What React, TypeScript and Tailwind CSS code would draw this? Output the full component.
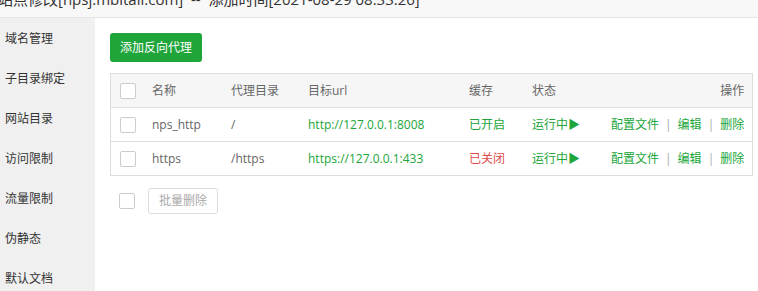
const MENU = ['域名管理', '子目录绑定', '网站目录', '访问限制', '流量限制', '伪静态', '默认文档'];

const ROWS = [
  { name: 'nps_http', dir: '/', url: 'http://127.0.0.1:8008', cache: true },
  { name: 'https', dir: '/https', url: 'https://127.0.0.1:433', cache: false },
];

const font = { fontFamily: '"Microsoft YaHei", "Open Sans", "Noto Sans CJK SC", sans-serif' };

function Check() {
  return <span className="block h-4 w-4 rounded-[2px] border border-[#cccccc] bg-white" />;
}

const cols = 'grid grid-cols-[32px_79px_77px_161px_63px_79px_1fr] items-center pl-[9px] pr-[8px]';

export default function App() {
  return (
    <div className="flex h-[291px] w-[758px] flex-col overflow-hidden bg-white text-[12px] text-[#666]" style={font}>
      <div className="h-[18px] shrink-0 overflow-hidden border-b border-[#e6e6e6] bg-[#f8f8f8]">
        <div className="-ml-[2px] -mt-[11px] whitespace-nowrap text-[15px] leading-[20px] text-[#333]">
          站点修改[npsj.mbitall.com]&nbsp;&nbsp;--&nbsp;&nbsp;添加时间[2021-08-29 08:33:26]
        </div>
      </div>
      <div className="flex min-h-0 flex-1">
        <div className="w-[95px] shrink-0 bg-[#f0f0f0] pt-[12px] text-[#333]">
          {MENU.map((m) => (
            <div key={m} className="h-[40px] pl-[5px] text-[12px] leading-[18px]">
              {m}
            </div>
          ))}
        </div>
        <div className="flex-1 pl-[15px] pr-[9px] pt-[15px]">
          <button className="h-[29px] rounded-[3px] bg-[#20a53a] px-[10px] text-[12px] text-white">添加反向代理</button>
          <div className="mt-[11px] border border-[#dddddd]">
            <div className={`${cols} h-[33px] bg-[#f6f6f6]`}>
              <Check />
              <span>名称</span>
              <span>代理目录</span>
              <span>目标url</span>
              <span>缓存</span>
              <span>状态</span>
              <span className="text-right">操作</span>
            </div>
            {ROWS.map((r) => (
              <div key={r.name} className={`${cols} h-[34px] border-t border-[#dddddd]`}>
                <Check />
                <span>{r.name}</span>
                <span>{r.dir}</span>
                <span className="text-[#20a53a]">{r.url}</span>
                <span className={r.cache ? 'text-[#20a53a]' : 'text-[#e04a4a]'}>{r.cache ? '已开启' : '已关闭'}</span>
                <span className="text-[#20a53a]">运行中▶</span>
                <span className="whitespace-nowrap text-right text-[#20a53a]">
                  配置文件<span className="mx-[6px] text-[#aaa]">|</span>编辑<span className="mx-[6px] text-[#aaa]">|</span>删除
                </span>
              </div>
            ))}
          </div>
          <div className="mt-[12px] flex items-center pl-[9px]">
            <Check />
            <button className="ml-[13px] h-[26px] w-[70px] rounded-[3px] border border-[#dddddd] bg-white text-[12px] text-[#aaaaaa]">
              批量删除
            </button>
          </div>
        </div>
      </div>
    </div>
  );
}
